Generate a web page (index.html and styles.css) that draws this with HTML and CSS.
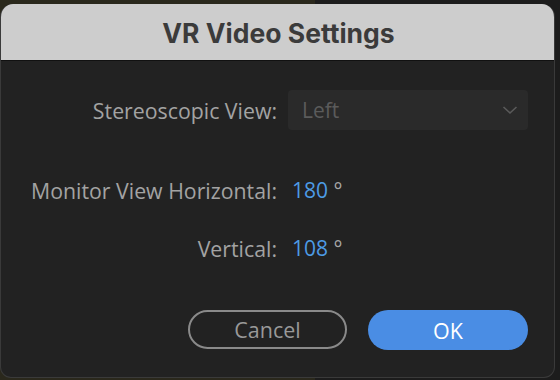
FILE: index.html
```html
<!DOCTYPE html>
<html>
<head>
<meta charset="utf-8">
<link rel="stylesheet" href="styles.css">
</head>
<body>
<div class="dialog">
  <div class="titlebar"><span class="title">VR Video Settings</span></div>
  <div class="content">
    <div class="form">
      <div class="label row1">Stereoscopic View:</div>
      <div class="select row1">
        <span class="select-text">Left</span>
        <svg class="chev" width="16" height="10" viewBox="0 0 16 10"><path d="M1.5 2 L8 8 L14.5 2" fill="none" stroke="#5a5a5a" stroke-width="1.6"/></svg>
      </div>
      <div class="label row2">Monitor View Horizontal:</div>
      <div class="value row2"><span class="num">180</span> °</div>
      <div class="label row3">Vertical:</div>
      <div class="value row3"><span class="num">108</span> °</div>
    </div>
    <div class="buttons">
      <button class="btn cancel">Cancel</button>
      <button class="btn ok">OK</button>
    </div>
  </div>
</div>
</body>
</html>
```
FILE: styles.css
```css
html, body {
  margin: 0;
  padding: 0;
}
body {
  width: 560px;
  height: 380px;
  overflow: hidden;
  background: linear-gradient(to right, #2a281c 0, #2a281c 315px, #1c1c1c 315px, #1c1c1c 100%);
  font-family: "Open Sans", "Noto Sans", sans-serif;
}
.dialog {
  margin-top: 4px;
  width: 555px;
  height: 374px;
  box-sizing: border-box;
  border-radius: 13px 13px 11px 11px;
  background: #222222;
  border: 1px solid #3a3a3a;
  border-top: none;
  overflow: hidden;
  display: flex;
  flex-direction: column;
}
.titlebar {
  height: 56px;
  flex: none;
  background: #cdcdcd;
  border-bottom: 1px solid #111;
  display: flex;
  align-items: center;
  justify-content: center;
}
.title {
  font-family: "Inter", "Liberation Sans", sans-serif;
  font-weight: 700;
  font-size: 26.5px;
  color: #3b3b3b;
  margin-left: 2px;
  margin-top: 1px;
}
.content {
  flex: 1;
  display: flex;
  flex-direction: column;
  padding-top: 29px;
}
.form {
  display: grid;
  grid-template-columns: 276px 240px;
  grid-template-rows: 40px 80px 58px;
  column-gap: 11px;
}
.label {
  font-size: 21.3px;
  color: #a3a3a3;
  text-align: right;
  display: flex;
  align-items: center;
  justify-content: flex-end;
  height: 40px;
  align-self: end;
  white-space: nowrap;
}
.value {
  font-size: 21px;
  color: #a8a8a8;
  display: flex;
  align-items: center;
  height: 40px;
  padding-left: 4px;
  align-self: end;
  white-space: pre;
}
.num { color: #4d9be6; }
.select {
  background: #2a2a2a;
  border-radius: 4px;
  height: 40px;
  display: flex;
  align-items: center;
  justify-content: space-between;
  padding: 0 10px 0 14px;
}
.select-text {
  font-size: 21px;
  color: #5b5b5b;
}
.chev { display: block; }
.buttons {
  margin-top: 42px;
  display: flex;
  justify-content: flex-end;
  gap: 21px;
  padding-right: 26px;
}
.btn {
  font-family: "Open Sans", "Noto Sans", sans-serif;
  font-size: 21.5px;
  height: 39px;
  width: 159px;
  border-radius: 20px;
  box-sizing: border-box;
  padding: 0;
  display: flex;
  align-items: center;
  justify-content: center;
}
.cancel {
  background: transparent;
  border: 2px solid #8a8a8a;
  color: #999999;
}
.ok {
  width: 160px;
  height: 40px;
  background: #4a8de4;
  border: none;
  color: #ffffff;
  font-weight: 500;
}
```
